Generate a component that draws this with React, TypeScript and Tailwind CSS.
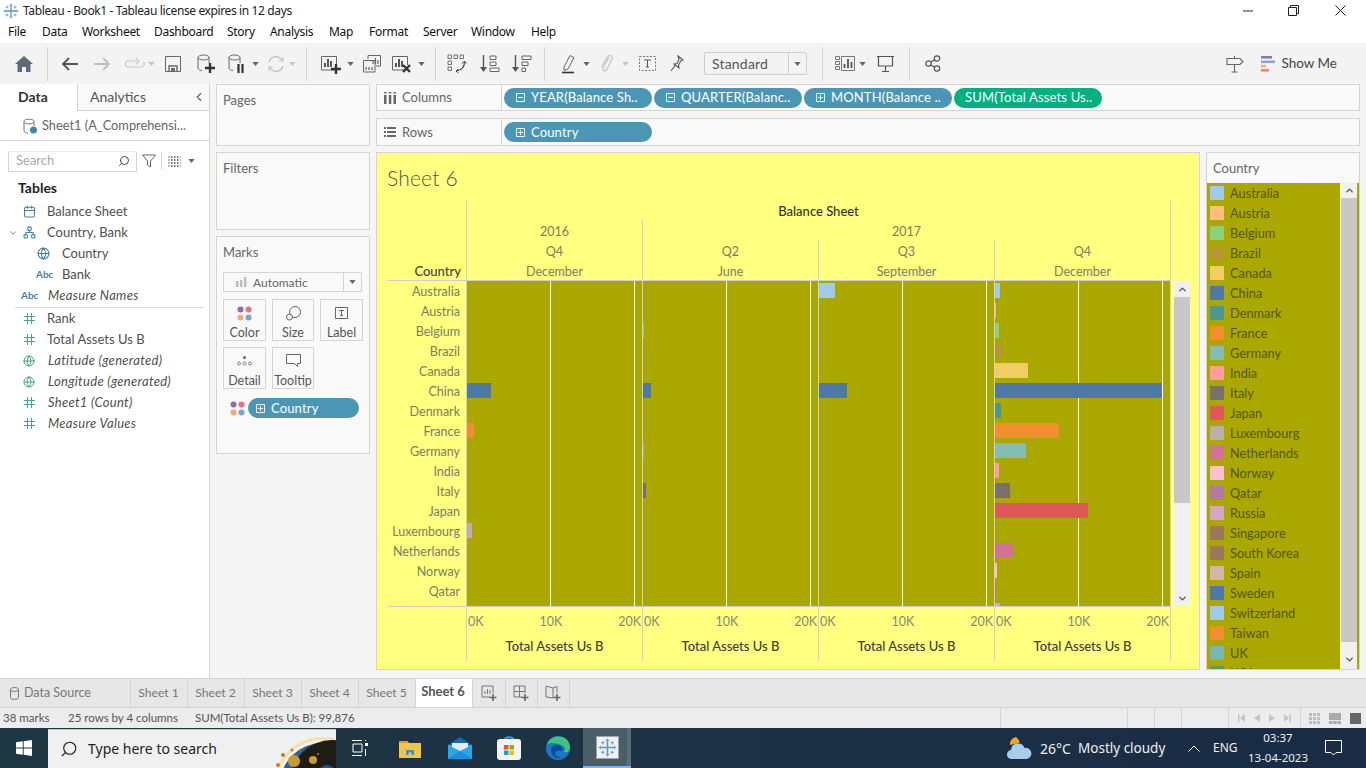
import { Calendar, ChevronDown, ChevronLeft, ChevronUp, Globe, Search, Network } from 'lucide-react'

const UI = "[font-family:Lato,sans-serif]"

const MENU = [
    { name: 'File', w: 'w-[34px]' },
    { name: 'Data', w: 'w-[40px]' },
    { name: 'Worksheet', w: 'w-[72px]' },
    { name: 'Dashboard', w: 'w-[73px]' },
    { name: 'Story', w: 'w-[43px]' },
    { name: 'Analysis', w: 'w-[59px]' },
    { name: 'Map', w: 'w-[40px]' },
    { name: 'Format', w: 'w-[54px]' },
    { name: 'Server', w: 'w-[48px]' },
    { name: 'Window', w: 'w-[60px]' },
    { name: 'Help', w: 'w-[40px]' },
]

const COLORS: Record<string, string> = {
    Australia: '#a0cbe8', Austria: '#ffbe7d', Belgium: '#8cd17d', Brazil: '#b6992d', Canada: '#f1ce63',
    China: '#4e79a7', Denmark: '#499894', France: '#f28e2b', Germany: '#86bcb6', India: '#ff9d9a',
    Italy: '#79706e', Japan: '#e15759', Luxembourg: '#bab0ac', Netherlands: '#d37295', Norway: '#fabfd2',
    Qatar: '#b07aa1', Russia: '#d4a6c8', Singapore: '#9d7660', 'South Korea': '#9d7660', Spain: '#d7b5a6',
    Sweden: '#4e79a7', Switzerland: '#a0cbe8', Taiwan: '#f28e2b', UK: '#76b7b2', USA: '#59a14f',
}

const CHART_ROWS = ['Australia', 'Austria', 'Belgium', 'Brazil', 'Canada', 'China', 'Denmark', 'France', 'Germany',
    'India', 'Italy', 'Japan', 'Luxembourg', 'Netherlands', 'Norway', 'Qatar', 'Russia']

const PANES: Record<string, number>[] = [
    { China: 24, France: 7, Luxembourg: 5 },
    { Belgium: 1, China: 8, Germany: 1, Italy: 3 },
    { Australia: 16, Brazil: 4, China: 28 },
    { Australia: 5, Austria: 1, Belgium: 4, Brazil: 8, Canada: 33, China: 167, Denmark: 6, France: 64, Germany: 31, India: 4, Italy: 15, Japan: 93, Netherlands: 18, Norway: 2, Qatar: 1, Russia: 5 },
]

const Caret = ({ light = false }: { light?: boolean }) => (
    <svg width="7" height="4" viewBox="0 0 8 5" className="shrink-0"><path d="M0 0h8L4 5z" fill={light ? '#c4c4c4' : '#666'} /></svg>
)

const Sep = () => <div className="w-px h-[34px] bg-[#d4d4d4] shrink-0" />

const Plus = ({ x, y, c = '#333' }: { x: number; y: number; c?: string }) => (
    <path d={`M${x} ${y - 5}v10M${x - 5} ${y}h10`} stroke={c} strokeWidth="2.4" fill="none" />
)

const SheetGlyph = ({ mark }: { mark: 'plus' | 'x' }) => (
    <svg width="24" height="22" viewBox="0 0 24 22" fill="none">
        <path d="M14 17H1.500V3.500H16.500V12" stroke="#666" strokeWidth="1" />
        <path d="M5 14V10M8 14V6M11 14V8" stroke="#555" strokeWidth="2" />
        {mark === 'plus' ? <Plus x={16} y={16} /> : <path d="M12 12l7 7M19 12l-7 7" stroke="#333" strokeWidth="2.4" />}
    </svg>
)

const Cylinder = ({ children }: { children?: React.ReactNode }) => (
    <svg width="20" height="22" viewBox="0 0 20 22" fill="none">
        <ellipse cx="7.500" cy="4.500" rx="5.500" ry="2.500" stroke="#666" />
        <path d="M2 4.500V15c0 1.500 2 2.500 4 2.500M13 4.500V10" stroke="#666" />
        {children}
    </svg>
)

const Toolbar = () => (
    <div className="h-[41px] bg-[#f3f3f3] flex items-center shrink-0">
        <div className="w-[47px] flex justify-center">
            <svg width="18" height="16" viewBox="0 0 18 16"><path d="M9 0L0 8h2.500v8H7v-5h4v5h4.500V8H18z" fill="#5d6b7b" /></svg>
        </div>
        <Sep />
        <div className="w-[44px] flex justify-center">
            <svg width="18" height="16" viewBox="0 0 18 16" fill="none"><path d="M17 8H2M8 2L2 8l6 6" stroke="#555" strokeWidth="1.800" /></svg>
        </div>
        <div className="w-[20px] flex justify-center">
            <svg width="18" height="16" viewBox="0 0 18 16" fill="none"><path d="M1 8h15M10 2l6 6-6 6" stroke="#bdbdbd" strokeWidth="1.800" /></svg>
        </div>
        <div className="w-[34px] flex justify-end pr-[1px]">
            <svg width="20" height="14" viewBox="0 0 20 14" fill="none"><path d="M12 4H3.500a3 3 0 0 0 0 6h13a3 3 0 0 0 2-5M11 1l3 3-3 3" stroke="#c9c9c9" strokeWidth="1.200" /></svg>
        </div>
        <div className="w-[8px] ml-[2px] mr-[4px]"><Caret light /></div>
        <div className="w-[26px] flex justify-center">
            <svg width="16" height="16" viewBox="0 0 16 16" fill="none"><path d="M.5.500h15v15H.5z" stroke="#666" /><path d="M4 15v-5h8v5" stroke="#666" strokeWidth="1.400" /><path d="M6 15v-3h4v3" fill="#666" /></svg>
        </div>
        <div className="w-[36px] flex justify-center pl-[4px]">
            <Cylinder><Plus x={14} y={15} /></Cylinder>
        </div>
        <div className="w-[26px] ml-[2px] flex justify-center">
            <Cylinder><path d="M11.500 11v9M15.500 11v9" stroke="#333" strokeWidth="2.200" /></Cylinder>
        </div>
        <div className="w-[8px] ml-[2px] mr-[3px]"><Caret /></div>
        <div className="w-[26px] flex justify-center">
            <svg width="18" height="18" viewBox="0 0 18 18" fill="none"><path d="M2 7a7 7 0 0 1 13-1.500M16 11A7 7 0 0 1 3 12.500" stroke="#c4c4c4" strokeWidth="1.400" /><path d="M16 2v4h-4M2 16v-4h4" stroke="#c4c4c4" strokeWidth="1.200" /></svg>
        </div>
        <div className="w-[8px] mr-[9px]"><Caret light /></div>
        <Sep />
        <div className="w-[32px] ml-[7px] flex justify-center pl-[3px]"><SheetGlyph mark="plus" /></div>
        <div className="w-[8px] ml-[1px]"><Caret /></div>
        <div className="w-[26px] ml-[4px] flex justify-center">
            <svg width="18" height="18" viewBox="0 0 18 18" fill="none"><path d="M5 4V.500h12.500V11H13" stroke="#666" /><path d="M.5 5.500H12V17H.5z" stroke="#666" fill="#f3f3f3" /><path d="M10 9V6M12.500 9V3M15 9V5M3 15v-3M6 15v-3M9 15v-3" stroke="#666" strokeWidth="1.200" /></svg>
        </div>
        <div className="w-[30px] ml-[3px] flex justify-center"><SheetGlyph mark="x" /></div>
        <div className="w-[8px] mr-[9px]"><Caret /></div>
        <Sep />
        <div className="w-[28px] ml-[7px] flex justify-center">
            <svg width="20" height="20" viewBox="0 0 20 20" fill="none"><path d="M1 1h3.500v3.500H1zM7 1h3.500v3.500H7zM13 1h3.500v3.500H13zM1 7h3.500v3.500H1zM1 13h3.500v3.500H1z" stroke="#666" strokeWidth=".9" /><path d="M17.500 8c0 5-3 8-8 9" stroke="#444" strokeWidth="1.200" /><path d="M15 9.500l2.500-2.500 2 2.500M11 15l-2 2 2.500 2" stroke="#444" /></svg>
        </div>
        <div className="w-[32px] ml-[3px] flex justify-center">
            <svg width="20" height="18" viewBox="0 0 20 18" fill="none"><path d="M3.500 0v15" stroke="#555" strokeWidth="1.400" /><path d="M0 12h7l-3.500 5z" fill="#555" /><path d="M10 1h6v3.500h-6zM10 7h6v3.500h-6zM10 13h9v3.500h-9z" stroke="#666" /></svg>
        </div>
        <div className="w-[32px] flex justify-center">
            <svg width="20" height="18" viewBox="0 0 20 18" fill="none"><path d="M3.500 0v15" stroke="#555" strokeWidth="1.400" /><path d="M0 12h7l-3.500 5z" fill="#555" /><path d="M10 1h9v3.500h-9zM10 7h6v3.500h-6zM10 13h3.500v3.500H10z" stroke="#666" /></svg>
        </div>
        <div className="w-[6px]" />
        <Sep />
        <div className="w-[30px] ml-[8px] flex justify-center pl-[1px]">
            <svg width="14" height="20" viewBox="0 0 14 20" fill="none"><path d="M2 13L8 1.500l4 2L6 15l-4 1.500z" stroke="#666" /><path d="M0 18.500h12" stroke="#333" strokeWidth="1.600" /></svg>
        </div>
        <div className="w-[8px]"><Caret /></div>
        <div className="w-[28px] ml-[1px] flex justify-center">
            <svg width="15" height="19" viewBox="0 0 15 19" fill="none"><path d="M10 3L4 14c-1 2.500 2 4 3.500 2L13 5c1.500-3-3-5-4.500-2L2.500 13" stroke="#c6c6c6" strokeWidth="1.300" /></svg>
        </div>
        <div className="w-[8px] ml-[2px]"><Caret light /></div>
        <div className="w-[34px] flex justify-center">
            <svg width="17" height="15" viewBox="0 0 17 15" fill="none"><path d="M.5.500h16v14H.5z" stroke="#777" strokeDasharray="2 1.500" /><path d="M5 4h7M8.500 4v7M7 11h3" stroke="#555" /></svg>
        </div>
        <div className="w-[26px] flex justify-center">
            <svg width="14" height="17" viewBox="0 0 14 17" fill="none"><path d="M8 1l5 4-2 .5L8.500 10l.5 3-5-4 3-.5L9 4.500zM5 10.500L1 16" stroke="#555" strokeWidth="1.100" /></svg>
        </div>
        <div className="w-[103px] h-[23px] ml-[14px] border border-[#cfcfcf] rounded-[2px] flex items-center shrink-0">
            <span className={`flex-1 pl-[7px] pb-px text-[14px] text-[#555] tracking-[.2px] ${UI}`}>Standard</span>
            <div className="w-[18px] h-full border-l border-[#cfcfcf] flex items-center justify-center"><Caret /></div>
        </div>
        <div className="w-[15px]" />
        <Sep />
        <div className="w-[20px] ml-[12px] flex justify-center">
            <svg width="20" height="15" viewBox="0 0 20 15" fill="none"><path d="M.5.500h4v3h-4zM.5 5.500h4v3h-4zM.5 10.500h4v3h-4zM6.500.500h13v14h-13z" stroke="#666" strokeWidth=".9" /><path d="M9.500 12V8M13 12V3M16.500 12V6" stroke="#555" strokeWidth="1.800" /></svg>
        </div>
        <div className="w-[8px] ml-[4px]"><Caret /></div>
        <div className="w-[26px] ml-[5px] flex justify-center">
            <svg width="17" height="17" viewBox="0 0 17 17" fill="none"><path d="M0 1.500h17M1.500 2v9h14V2M8.500 11v5M5 16.500h7" stroke="#555" strokeWidth="1.200" /></svg>
        </div>
        <div className="w-[11px]" />
        <Sep />
        <div className="w-[46px] flex justify-center">
            <svg width="16" height="17" viewBox="0 0 16 17" fill="none"><circle cx="3.500" cy="8.500" r="2.700" stroke="#555" strokeWidth="1.200" /><circle cx="12" cy="3.500" r="2.700" stroke="#555" strokeWidth="1.200" /><circle cx="12" cy="13.500" r="2.700" stroke="#555" strokeWidth="1.200" /><path d="M6 7l3.500-2.200M6 10l3.500 2.200" stroke="#555" strokeWidth="1.200" /></svg>
        </div>
        <div className="flex-1" />
        <svg width="18" height="18" viewBox="0 0 18 18" fill="none" className="mr-[17px]"><path d="M1 3.500h13l3 3-3 3H1zM8.500 1v2.500M8.500 9.500V17M5.500 17h6" stroke="#666" strokeWidth="1.100" /></svg>
        <svg width="14" height="16" viewBox="0 0 14 16" className="mr-[6px]"><path d="M0 0h11v2.600H0z" fill="#8a7aa3" /><path d="M0 4.500h14v2.600H0z" fill="#85a8cc" /><path d="M0 8.800h5v2.600H0z" fill="#f2ae7a" /><path d="M0 13h8v2.600H0z" fill="#f27c85" /></svg>
        <span className={`text-[13.500px] pb-px text-[#444] mr-[29px] ${UI}`}>Show Me</span>
    </div>
)

const Pill = ({ label, kind, wide = false }: { label: string; kind?: 'plus' | 'minus'; wide?: boolean }) => (
    <div className={`h-5 rounded-full flex items-center shrink-0 ${wide ? 'w-[111px] pl-[8px]' : 'w-[148px] pl-[12px]'} ${kind ? 'bg-[#4b96b4]' : 'bg-[#00b180] !pl-[11px]'}`}>
        {kind && (
            <svg width="9" height="9" viewBox="0 0 9 9" fill="none" className="mr-[6px] shrink-0">
                <path d="M.5.500h8v8h-8zM2 4.500h5" stroke="#fff" strokeWidth=".9" />
                {kind === 'plus' && <path d="M4.500 2v5" stroke="#fff" strokeWidth=".9" />}
            </svg>
        )}
        <span className={`text-[13px] pt-px text-white whitespace-nowrap tracking-[.15px] ${UI}`}>{label}</span>
    </div>
)

const Hash = () => (
    <svg width="11" height="11" viewBox="0 0 11 11" fill="none"><path d="M3.500 0v11M7.500 0v11M0 3.500h11M0 7.500h11" stroke="#45a587" /></svg>
)

const Field = ({ icon, label, italic = false, pl = 'pl-[21px]', gap = 'w-[26px]' }: { icon: React.ReactNode; label: string; italic?: boolean; pl?: string; gap?: string }) => (
    <div className={`h-[21px] flex items-center ${pl}`}>
        <div className={`${gap} flex shrink-0 items-center`}>{icon}</div>
        <span className={`text-[13px] text-[#4f4f4f] whitespace-nowrap ${italic ? 'italic tracking-[.3px]' : ''}`}>{label}</span>
    </div>
)

const AbcIcon = () => <span className="text-[10px] font-bold text-[#4a7f9e]">Abc</span>

const DataPane = () => (
    <aside className={`w-[210px] bg-white border-r border-[#d4d4d4] shrink-0 flex flex-col ${UI}`}>
        <div className="h-[27px] flex shrink-0">
            <div className="w-[77px] pl-[18px] pb-[2px] flex items-center text-[14px] font-bold text-[#333]">Data</div>
            <div className="flex-1 flex items-center border-l border-b border-[#d4d4d4] pl-[12px] pr-[3px] pb-[1px] justify-between text-[14px] text-[#555] bg-[#f9f9f9]">
                Analytics
                <ChevronLeft size={14} color="#666" />
            </div>
        </div>
        <div className="h-[30px] flex items-center pl-[22px] border-b border-[#d4d4d4] shrink-0">
            <svg width="16" height="16" viewBox="0 0 16 16" fill="none" className="mr-[4px]"><ellipse cx="7" cy="3.500" rx="5" ry="2.300" stroke="#777" /><path d="M2 3.500V13c0 1 2 2 4 2M12 3.500V8" stroke="#777" /><circle cx="11.500" cy="12" r="3.500" fill="#3f88ad" /></svg>
            <span className="text-[12.800px] text-[#666] whitespace-nowrap">Sheet1 (A_Comprehensi...</span>
        </div>
        <div className="h-[20px] mt-[10px] ml-[8px] flex items-center shrink-0">
            <div className="w-[129px] h-[21px] border border-[#d4d4d4] border-t-[#ececec] flex items-center justify-between pl-[7px] pr-[6px] rounded-[1px]">
                <span className="text-[13px] text-[#aaa]">Search</span>
                <Search size={12} color="#444" className="-scale-x-100" />
            </div>
            <svg width="14" height="14" viewBox="0 0 14 14" fill="none" className="ml-[5px]"><path d="M.5 1h13L8.500 7v6l-3-2V7z" stroke="#666" /></svg>
            <div className="w-px h-[18px] bg-[#d4d4d4] ml-[5px]" />
            <svg width="13" height="11" viewBox="0 0 13 11" fill="none" className="ml-[6px]"><path d="M0 1h13M0 4h13M0 7h13M0 10h13M3.500 0v11M6.500 0v11M9.500 0v11" stroke="#777" strokeDasharray="2 1" /></svg>
            <div className="ml-[7px]"><Caret /></div>
        </div>
        <div className="mt-[7px] pl-[18px] h-[18px] flex items-center text-[14px] font-bold text-[#222]">Tables</div>
        <div className="mt-[5px]">
            <Field icon={<Calendar size={13} color="#3d82a3" />} label="Balance Sheet" pl="pl-[23px]" gap="w-[24px]" />
            <div className="h-[21px] flex items-center pl-[8px]">
                <ChevronDown size={10} color="#666" className="mr-[5px]" />
                <Network size={13} color="#3d82a3" className="mr-[11px]" />
                <span className="text-[13px] text-[#4f4f4f]">Country, Bank</span>
            </div>
            <Field icon={<Globe size={13} color="#3d82a3" />} label="Country" pl="pl-[37px]" gap="w-[25px]" />
            <Field icon={<AbcIcon />} label="Bank" pl="pl-[36px]" gap="w-[26px]" />
            <Field icon={<AbcIcon />} label="Measure Names" italic pl="pl-[21px]" gap="w-[27px]" />
        </div>
        <div className="h-px bg-[#d9d9d9] ml-[15px] mr-[6px] mt-[1px]" />
        <div>
            <Field icon={<Hash />} label="Rank" pl="pl-[24px]" gap="w-[23px]" />
            <Field icon={<Hash />} label="Total Assets Us B" pl="pl-[24px]" gap="w-[23px]" />
            <Field icon={<Globe size={12} color="#45a587" />} label="Latitude (generated)" italic pl="pl-[23px]" gap="w-[25px]" />
            <Field icon={<Globe size={12} color="#45a587" />} label="Longitude (generated)" italic pl="pl-[23px]" gap="w-[25px]" />
            <Field icon={<Hash />} label="Sheet1 (Count)" italic pl="pl-[24px]" gap="w-[24px]" />
            <Field icon={<Hash />} label="Measure Values" italic pl="pl-[24px]" gap="w-[24px]" />
        </div>
    </aside>
)

const Dots = () => (
    <svg width="15" height="15" viewBox="0 0 15 15">
        <circle cx="3.500" cy="3.500" r="3" fill="#8a6f9f" /><circle cx="11.500" cy="3.500" r="3" fill="#ef6f80" />
        <circle cx="3.500" cy="11.500" r="3" fill="#f2a97a" /><circle cx="11.500" cy="11.500" r="3" fill="#7ea3cc" />
    </svg>
)

const MarkBtn = ({ label, w, icon }: { label: string; w: string; icon: React.ReactNode }) => (
    <div className={`${w} h-[42px] border border-[#d4d4d4] flex flex-col items-center shrink-0`}>
        <div className="h-[26px] flex items-center justify-center">{icon}</div>
        <span className="text-[12.500px] leading-[13px] text-[#555]">{label}</span>
    </div>
)

const CardsColumn = () => (
    <div className={`w-[166px] px-[6px] flex flex-col gap-[6px] shrink-0 ${UI}`}>
        <div className="h-[62px] bg-[#f9f9f9] border border-[#d4d4d4] pl-[6px] pt-[6px] text-[13px] text-[#666]">Pages</div>
        <div className="h-[78px] bg-[#f9f9f9] border border-[#d4d4d4] pl-[6px] pt-[6px] text-[13px] text-[#666]">Filters</div>
        <div className="h-[218px] bg-[#f9f9f9] border border-[#d4d4d4] px-[6px]">
            <div className="mt-[8px] text-[13px] text-[#666] h-[18px] leading-[15px]">Marks</div>
            <div className="mt-[9px] h-[20px] w-[139px] border border-[#d4d4d4] flex items-center">
                <svg width="11" height="10" viewBox="0 0 11 10" className="ml-[12px] mr-[6px]"><path d="M0 4h2.500v6H0zM4 3h2.500v7H4zM8 0h2.500v10H8z" fill="#bdbdbd" /></svg>
                <span className="text-[12px] pt-px text-[#666] flex-1">Automatic</span>
                <div className="w-[18px] h-full border-l border-[#d4d4d4] flex items-center justify-center"><Caret /></div>
            </div>
            <div className="mt-[7px] flex gap-[6px]">
                <MarkBtn label="Color" w="w-[43px]" icon={<Dots />} />
                <MarkBtn label="Size" w="w-[42px]" icon={<svg width="15" height="15" viewBox="0 0 15 15" fill="none"><circle cx="9" cy="6" r="5.500" stroke="#666" /><circle cx="3.500" cy="11" r="3" stroke="#666" fill="#f9f9f9" /></svg>} />
                <MarkBtn label="Label" w="w-[43px]" icon={<svg width="13" height="12" viewBox="0 0 13 12" fill="none"><path d="M.5.500h12v11H.5zM4 3.500h5M6.500 3.500v5M5 8.500h3" stroke="#555" strokeWidth=".9" /></svg>} />
            </div>
            <div className="mt-[6px] flex gap-[6px]">
                <MarkBtn label="Detail" w="w-[43px]" icon={<svg width="15" height="10" viewBox="0 0 15 10" fill="none"><circle cx="7.500" cy="1.500" r="1.500" fill="#666" /><circle cx="2" cy="7.500" r="1.500" stroke="#666" strokeWidth=".8" /><circle cx="7.500" cy="7.500" r="1.500" stroke="#666" strokeWidth=".8" /><circle cx="13" cy="7.500" r="1.500" stroke="#666" strokeWidth=".8" /></svg>} />
                <MarkBtn label="Tooltip" w="w-[42px]" icon={<svg width="15" height="14" viewBox="0 0 15 14" fill="none"><path d="M.5.500h14v9h-3v3l-3-3h-8z" stroke="#666" /></svg>} />
            </div>
            <div className="mt-[9px] flex items-center">
                <div className="w-[25px] pl-[7px]"><Dots /></div>
                <Pill label="Country" kind="plus" wide />
            </div>
        </div>
    </div>
)

const Shelf = ({ label, icon, h, children }: { label: string; icon: React.ReactNode; h: string; children: React.ReactNode }) => (
    <div className={`${h} bg-[#f9f9f9] border border-[#d4d4d4] flex items-center shrink-0`}>
        <div className={`w-[125px] h-full flex items-center border-r border-[#d4d4d4] pl-[6px] gap-[6px] text-[13px] text-[#666] ${UI}`}>
            <span className="w-[13px] flex justify-center">{icon}</span>
            <span className="pt-px">{label}</span>
        </div>
        <div className="flex gap-[2px] pl-[2px]">{children}</div>
    </div>
)

const HeadCell = ({ children, bold = false }: { children: React.ReactNode; bold?: boolean }) => (
    <div className={`h-5 flex items-center justify-center ${bold ? 'pt-[3px] font-medium text-[#333] text-[13px]' : 'pt-[4px] text-[12.500px] text-[#7d7d60]'}`}>{children}</div>
)

const Pane = ({ bars }: { bars: Record<string, number> }) => (
    <div className="relative w-[176px] border-l border-[#cfcfda] shrink-0">
        <div className="absolute top-0 bottom-0 left-[83px] w-px bg-white" />
        <div className="absolute top-0 bottom-0 left-[167px] w-px bg-white" />
        {CHART_ROWS.map((c) => (
            <div key={c} className="h-5 pt-[2px] relative">
                {bars[c] ? <div className="h-[15px]" style={{ width: bars[c], background: COLORS[c] }} /> : null}
            </div>
        ))}
    </div>
)

const AxisFoot = () => (
    <div className="w-[176px] shrink-0 border-l border-[#cfcfda]">
        <div className="h-[29px] pt-[2px] flex items-center justify-between px-[1px] text-[12.500px] text-[#8a8a68]">
            <span>0K</span><span>10K</span><span>20K</span>
        </div>
        <div className="h-[20px] pt-[2px] flex items-center justify-center text-[13px] font-medium text-[#3f3d35]">Total Assets Us B</div>
    </div>
)

const Chart = () => (
    <div className={`h-[518px] w-[824px] bg-[#ffff80] border border-[#d3d3e0] pl-[10px] shrink-0 ${UI}`}>
        <div className="h-[47px] pt-[11px] text-[21px] leading-[28px] font-light text-[#555] tracking-[.2px]">Sheet 6</div>
        <div className="flex h-[80px] w-[784px]">
            <div className="w-[79px] flex items-end justify-end pr-[5px] shrink-0">
                <div className="h-5 pt-[3px] flex items-center text-[13px] font-medium text-[#444]">Country</div>
            </div>
            <div className="w-[705px] border-x border-[#cfcfda]">
                <HeadCell bold>Balance Sheet</HeadCell>
                <div className="flex">
                    <div className="w-[175px] shrink-0">
                        <HeadCell>2016</HeadCell><HeadCell>Q4</HeadCell><HeadCell>December</HeadCell>
                    </div>
                    <div className="w-[528px] border-l border-[#cfcfda] shrink-0">
                        <HeadCell>2017</HeadCell>
                        <div className="flex">
                            <div className="w-[175px] shrink-0"><HeadCell>Q2</HeadCell><HeadCell>June</HeadCell></div>
                            <div className="w-[176px] border-l border-[#cfcfda] shrink-0"><HeadCell>Q3</HeadCell><HeadCell>September</HeadCell></div>
                            <div className="w-[176px] border-l border-[#cfcfda] shrink-0"><HeadCell>Q4</HeadCell><HeadCell>December</HeadCell></div>
                        </div>
                    </div>
                </div>
            </div>
        </div>
        <div className="flex h-[327px]">
            <div className="w-[784px] flex border-y border-[#cfcfda] overflow-hidden shrink-0">
                <div className="w-[79px] shrink-0">
                    {CHART_ROWS.map((c) => (
                        <div key={c} className="h-5 pt-[2px] pr-[6px] flex items-center justify-end text-[12.500px] text-[#7d7d60] whitespace-nowrap">{c}</div>
                    ))}
                </div>
                <div className="flex bg-[#aaa800] border-r border-[#cfcfda] w-[705px] shrink-0">
                    {PANES.map((bars, i) => <Pane key={i} bars={bars} />)}
                </div>
            </div>
            <div className="ml-[3px] mt-px w-4 h-[325px] bg-[#f0f0f0] flex flex-col shrink-0">
                <div className="h-4 flex items-center justify-center"><ChevronUp size={11} strokeWidth={3} color="#555" /></div>
                <div className="h-[206px] bg-[#c8c8c8]" />
                <div className="flex-1" />
                <div className="h-4 flex items-center justify-center"><ChevronDown size={11} strokeWidth={3} color="#555" /></div>
            </div>
        </div>
        <div className="flex w-[784px] h-[54px]">
            <div className="w-[79px] shrink-0" />
            <div className="flex border-r border-[#cfcfda] w-[705px]">
                {PANES.map((_, i) => <AxisFoot key={i} />)}
            </div>
        </div>
    </div>
)

const Legend = () => (
    <div className={`w-[154px] h-[518px] bg-[#f9f9f9] border border-[#d4d4d4] flex flex-col shrink-0 ${UI}`}>
        <div className="h-[30px] pl-[6px] pt-px flex items-center text-[13px] text-[#666] shrink-0">Country</div>
        <div className="flex-1 bg-[#aaa800] flex overflow-hidden">
            <div className="w-[133px] shrink-0 overflow-hidden">
                {Object.entries(COLORS).map(([name, color]) => (
                    <div key={name} className="h-5 flex items-center pl-[3px]">
                        <div className="w-[14px] h-[14px] shrink-0" style={{ background: color }} />
                        <span className="ml-[6px] pt-[2px] text-[12.800px] text-[#56550f] whitespace-nowrap">{name}</span>
                    </div>
                ))}
            </div>
            <div className="w-px bg-[#f4f4d0] shrink-0" />
            <div className="w-4 bg-[#f0f0f0] flex flex-col shrink-0">
                <div className="h-[15px] flex items-center justify-center"><ChevronUp size={11} strokeWidth={3} color="#555" /></div>
                <div className="h-[444px] bg-[#c8c8c8]" />
                <div className="flex-1 flex items-center justify-center pt-[8px]"><ChevronDown size={11} strokeWidth={3} color="#555" /></div>
            </div>
        </div>
    </div>
)

const TabBar = () => {
    const sheets = ['Sheet 1', 'Sheet 2', 'Sheet 3', 'Sheet 4', 'Sheet 5']
    return (
        <div className={`h-[30px] bg-[#e7e7e7] border-y border-[#d4d4d4] flex shrink-0 ${UI}`}>
            <div className="w-[131px] border-r border-[#d4d4d4] flex items-center pl-[9px] text-[12.500px] text-[#777] shrink-0">
                <svg width="11" height="13" viewBox="0 0 11 13" fill="none" className="mr-[4px]"><ellipse cx="5.500" cy="2.500" rx="4" ry="2" stroke="#777" /><path d="M1.500 2.500v8c0 2.500 8 2.500 8 0v-8" stroke="#777" /></svg>
                Data Source
            </div>
            {sheets.map((s) => (
                <div key={s} className="w-[57px] border-r border-[#d4d4d4] pr-px flex items-center justify-center text-[12.200px] text-[#777] shrink-0">{s}</div>
            ))}
            <div className="w-[57px] bg-white border-r border-[#d4d4d4] pr-[2px] flex items-center justify-center pb-[2px] text-[13px] font-bold text-[#555] shrink-0">Sheet 6</div>
            <div className="w-[33px] border-r border-[#d4d4d4] flex items-center justify-center shrink-0">
                <svg width="17" height="17" viewBox="0 0 17 17" fill="none"><path d="M9 12H1V1h11v7" stroke="#777" /><path d="M4 9V6M6.500 9V4M9 9V5" stroke="#777" /><path d="M12 9v7M8.500 12.500h7" stroke="#666" strokeWidth="1.600" /></svg>
            </div>
            <div className="w-[32px] border-r border-[#d4d4d4] flex items-center justify-center shrink-0">
                <svg width="17" height="17" viewBox="0 0 17 17" fill="none"><path d="M9 12H1V1h11v7M1 6.500h11M6.500 1v11" stroke="#777" /><path d="M12 9v7M8.500 12.500h7" stroke="#666" strokeWidth="1.600" /></svg>
            </div>
            <div className="w-[32px] border-r border-[#d4d4d4] flex items-center justify-center shrink-0">
                <svg width="17" height="17" viewBox="0 0 17 17" fill="none"><path d="M8 13L1 12V1l7 2 4-1.500V8M8 3v10" stroke="#777" /><path d="M12 9v7M8.500 12.500h7" stroke="#666" strokeWidth="1.600" /></svg>
            </div>
        </div>
    )
}

const StatusBar = () => (
    <div className={`h-[20px] bg-[#ececec] flex items-center text-[11.500px] text-[#555] shrink-0 ${UI}`}>
        <span className="ml-[3px] w-[65px]">38 marks</span>
        <span className="w-[127px]">25 rows by 4 columns</span>
        <span className="w-[805px] whitespace-nowrap">SUM(Total Assets Us B): 99,876</span>
        <div className="w-[127px] h-full border-l border-[#d4d4d4]" />
        <div className="w-[27px] h-full border-l border-[#d4d4d4]" />
        <div className="w-[27px] h-full border-l border-[#d4d4d4]" />
        <div className="w-[47px] h-full border-l border-[#d4d4d4]" />
        <div className="w-[72px] h-full border-l border-[#d4d4d4] flex items-center justify-center gap-[9px]">
            <svg width="7" height="8" viewBox="0 0 7 8"><path d="M0 0h1.500v8H0zM7 0v8L2 4z" fill="#c4c4c4" /></svg>
            <svg width="6" height="8" viewBox="0 0 6 8"><path d="M6 0v8L0 4z" fill="#c4c4c4" /></svg>
            <svg width="6" height="8" viewBox="0 0 6 8"><path d="M0 0v8l6-4z" fill="#c4c4c4" /></svg>
            <svg width="7" height="8" viewBox="0 0 7 8"><path d="M0 0v8l5-4zM5.500 0H7v8H5.500z" fill="#c4c4c4" /></svg>
        </div>
        <div className="flex-1 h-full border-l border-[#d4d4d4] flex items-center pl-[8px] gap-[9px]">
            <svg width="11" height="11" viewBox="0 0 11 11"><path d="M0 0h3v3H0zM4 0h3v3H4zM8 0h3v3H8zM0 4h3v3H0zM4 4h3v3H4zM8 4h3v3H8zM0 8h3v3H0zM4 8h3v3H4zM8 8h3v3H8z" fill="#bdbdbd" /></svg>
            <svg width="12" height="11" viewBox="0 0 12 11"><path d="M0 0h12v7H0zM0 8h3.500v3H0zM4.200 8h3.500v3H4.200zM8.500 8H12v3H8.500z" fill="#aaa" /></svg>
            <div className="w-[11px] h-[11px] bg-[#666]" />
        </div>
    </div>
)

const LogoMark = ({ size = 16 }: { size?: number }) => (
    <svg width={size} height={size} viewBox="0 0 16 16" fill="none">
        <path d="M8 2.500v11M2.500 8h11" stroke="#5a97c2" strokeWidth="1.300" />
        <path d="M8 .5v3M6.500 2h3M8 12.500v3M6.500 14h3M.5 8h3M2 6.500v3M12.500 8h3M14 6.500v3" stroke="#6f9cbf" strokeWidth=".9" />
        <path d="M4 2.500v3M2.500 4h3M12 2.500v3M10.500 4h3M4 10.500v3M2.500 12h3M12 10.500v3M10.500 12h3" stroke="#7e9ab5" strokeWidth=".9" />
    </svg>
)

const Taskbar = () => (
    <div className="h-10 bg-linear-to-r from-[#1f3742] to-[#1a2b45] flex items-center shrink-0 [font-family:'Noto_Sans',sans-serif]">
        <div className="w-12 flex justify-center shrink-0">
            <svg width="16" height="16" viewBox="0 0 16 16"><path d="M0 2.300L6.800 1.300v6.200H0zM7.700 1.200L16 0v7.500H7.700zM0 8.400h6.800v6.300L0 13.700zM7.700 8.400H16V16l-8.300-1.200z" fill="#fff" /></svg>
        </div>
        <div className="relative w-[288px] h-[39px] mt-px bg-[#f0f0f0] border-t border-[#c9c9c9] flex items-center pl-[12px] overflow-hidden shrink-0">
            <Search size={18} color="#222" strokeWidth={1.500} className="-scale-x-100" />
            <span className="ml-[10px] pb-[2px] text-[14px] text-[#222]">Type here to search</span>
            <svg width="80" height="39" viewBox="0 0 80 39" className="absolute right-0 top-0">
                <circle cx="66" cy="55" r="48" fill="#f5dfae" />
                <circle cx="66" cy="55" r="45" fill="#fff4dc" />
                <circle cx="66" cy="55" r="42" fill="#2d5f9c" />
                <circle cx="76" cy="52" r="42" fill="#1f1c14" />
                <circle cx="38" cy="31" r="6" fill="#c79a35" />
                <circle cx="57" cy="30" r="4" fill="#c79a35" />
                <circle cx="22" cy="35" r="2" fill="#a58a3a" />
                <circle cx="27" cy="25" r="2" fill="#a58a3a" />
                <circle cx="36" cy="20" r="1.500" fill="#a58a3a" />
                <circle cx="44" cy="20" r="1" fill="#a58a3a" />
                <circle cx="62" cy="24" r="1" fill="#a58a3a" />
                <circle cx="71" cy="44" r="9" fill="#24518d" />
            </svg>
        </div>
        <div className="w-[48px] flex justify-center shrink-0">
            <svg width="16" height="16" viewBox="0 0 16 16" fill="none"><path d="M0 .5h10M0 15.500h10M1 4h9v8H1z" stroke="#fff" /><path d="M13 3h3v3h-3z" fill="#fff" /><path d="M13.500 9v7M13.500 0v1" stroke="#fff" /></svg>
        </div>
        <div className="w-[50px] ml-[1px] flex justify-center shrink-0">
            <svg width="22" height="19" viewBox="0 0 22 19"><path d="M0 2h8l2 2h12v15H0z" fill="#f5c542" /><path d="M0 2h8l2 2H0z" fill="#d49d28" /><path d="M7 11h8v5h-2.500v-2.500h-3V16H7z" fill="#3e8ed0" /></svg>
        </div>
        <div className="w-[50px] flex justify-center shrink-0">
            <svg width="24" height="22" viewBox="0 0 24 22"><path d="M12 0l12 8v14H0V8z" fill="#0f6cbd" /><path d="M0 8h24v14H0z" fill="#28a8ea" /><path d="M4 6h16v4l-8 4-8-4z" fill="#e8eef4" /><path d="M0 22l12-8 12 8z" fill="#1490df" /></svg>
        </div>
        <div className="w-[48px] flex justify-center shrink-0">
            <svg width="24" height="24" viewBox="0 0 24 24" fill="none"><path d="M7 5c0-5 10-5 10 0" stroke="#2aa5dc" strokeWidth="1.800" /><rect y="3" width="24" height="21" rx="3" fill="#f4f4f4" /><path d="M7 9h4.500v4.500H7z" fill="#f25022" /><path d="M12.500 9H17v4.500h-4.500z" fill="#7fba00" /><path d="M7 14.500h4.500V19H7z" fill="#00a4ef" /><path d="M12.500 14.500H17V19h-4.500z" fill="#ffb900" /></svg>
        </div>
        <div className="w-[50px] flex justify-center shrink-0">
            <svg width="24" height="24" viewBox="0 0 24 24"><circle cx="12" cy="12" r="12" fill="#1b78c7" /><path d="M1 9C3 1 13-2 20 3c3 2 4 6 4 9 0 3-3 5-6 4 2-2 1-6-3-7C10 7 3 6 1 9z" fill="#3fc47d" /><path d="M5 14c0-4 4-6 8-5 4 1 4 5 3 6-3 0-6-1-7 2 0 2 2 4 6 5-6 1-10-3-10-8z" fill="#0b4c9a" /></svg>
        </div>
        <div className="w-[44px] h-full bg-[#4a5e68] border-b-[2px] border-[#7cb6e8] flex justify-center items-center pl-[4px] shrink-0">
            <div className="w-[23px] h-[23px] bg-[#eef2f5] border border-[#9aa5ab] flex items-center justify-center">
                <LogoMark size={19} />
            </div>
        </div>
        <div className="w-[4px] h-full bg-[#5c6d77] border-b-[2px] border-[#7cb6e8] shrink-0" />
        <div className="flex-1" />
        <svg width="25" height="24" viewBox="0 0 25 24" className="mr-[8px]"><path d="M9 1a7 7 0 0 0-6 8l9-2C13 5 12 4 9 1z" fill="#f2a51e" /><path d="M5 23a4.500 4.500 0 0 1-1-9 7 7 0 0 1 13.500-2 5.500 5.500 0 0 1 2.500 11z" fill="#a9cdf0" /></svg>
        <span className="text-[14px] text-[#f0f0f0] w-[38px] whitespace-nowrap">26°C</span>
        <span className="text-[13.500px] text-[#f0f0f0] w-[110px] whitespace-nowrap">Mostly cloudy</span>
        <svg width="12" height="7" viewBox="0 0 12 7" fill="none"><path d="M.5 6.500L6 1l5.500 5.500" stroke="#fff" /></svg>
        <span className="ml-[13px] text-[12px] text-[#f0f0f0] w-[28px]">ENG</span>
        <div className="w-[74px] text-[11.500px] leading-[20px] text-[#f0f0f0] text-center whitespace-nowrap">
            <div>03:37</div>
            <div>13-04-2023</div>
        </div>
        <svg width="17" height="16" viewBox="0 0 17 16" fill="none" className="ml-[10px] mr-[24px]"><path d="M.5.500h16v12H11L8.500 15 6 12.500H.5z" stroke="#fff" /></svg>
    </div>
)

const App = () => (
    <div className="w-[1366px] h-[768px] flex flex-col overflow-hidden bg-white">
        <div className="h-[21px] flex items-center shrink-0 [font-family:'Noto_Sans',sans-serif]">
            <div className="ml-[3px] mr-[4px]"><LogoMark size={16} /></div>
            <span className="text-[12px] tracking-[-.38px] text-[#222]">Tableau - Book1 - Tableau license expires in 12 days</span>
            <div className="flex-1" />
            <svg width="10" height="2" viewBox="0 0 10 2" className="mr-[35px]"><path d="M0 1h10" stroke="#222" /></svg>
            <svg width="11" height="11" viewBox="0 0 11 11" fill="none" className="mr-[36px]"><path d="M.5 2.500h8v8h-8zM2.500 2.500v-2h8v8h-2" stroke="#222" /></svg>
            <svg width="11" height="11" viewBox="0 0 11 11" fill="none" className="mr-[20px]"><path d="M.5.500l10 10M10.500.5l-10 10" stroke="#222" /></svg>
        </div>
        <div className="h-[22px] flex items-center pl-[8px] shrink-0 [font-family:'Noto_Sans',sans-serif]">
            {MENU.map((m) => (
                <span key={m.name} className={`${m.w} text-[12px] tracking-[-.3px] text-[#111] whitespace-nowrap`}>{m.name}</span>
            ))}
        </div>
        <Toolbar />
        <div className="h-[594px] flex bg-[#f5f5f5] shrink-0">
            <DataPane />
            <CardsColumn />
            <div className="w-[984px] flex flex-col gap-[6px] shrink-0">
                <Shelf label="Columns" h="h-[27px] mb-px" icon={<svg width="12" height="12" viewBox="0 0 12 12"><path d="M0 3h2.500v9H0zM4.800 3h2.500v9H4.800zM9.500 3H12v9H9.500zM0 0h2.500v1.500H0zM4.800 0h2.500v1.500H4.800zM9.500 0H12v1.500H9.500z" fill="#666" /></svg>}>
                    <Pill label="YEAR(Balance Sh.." kind="minus" />
                    <Pill label="QUARTER(Balanc.." kind="minus" />
                    <Pill label="MONTH(Balance .." kind="plus" />
                    <Pill label="SUM(Total Assets Us.." />
                </Shelf>
                <Shelf label="Rows" h="h-[28px]" icon={<svg width="12" height="10" viewBox="0 0 12 10"><path d="M3 0h9v2H3zM3 4h9v2H3zM3 8h9v2H3zM0 0h2v2H0zM0 4h2v2H0zM0 8h2v2H0z" fill="#666" /></svg>}>
                    <Pill label="Country" kind="plus" />
                </Shelf>
                <div className="flex gap-[6px]">
                    <Chart />
                    <Legend />
                </div>
            </div>
        </div>
        <TabBar />
        <StatusBar />
        <Taskbar />
    </div>
)

export default App
